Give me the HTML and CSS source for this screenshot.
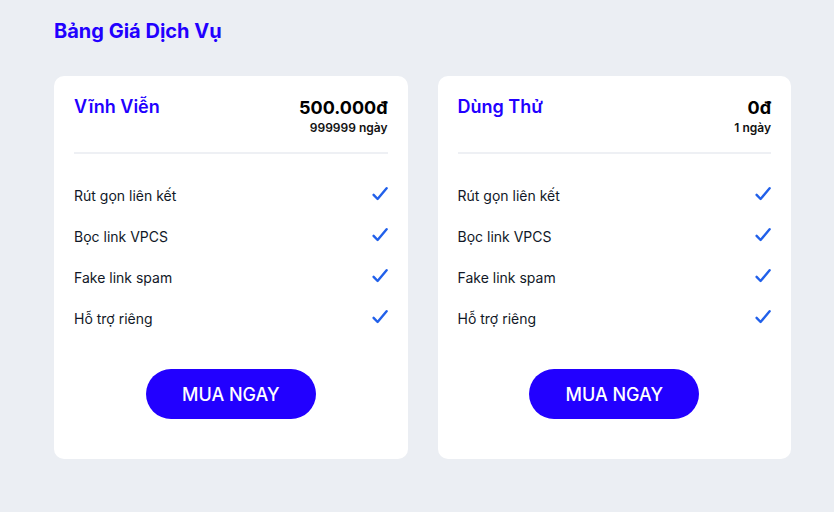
FILE: index.html
```html
<!DOCTYPE html>
<html lang="vi">
<head>
<meta charset="utf-8">
<title>Bảng Giá Dịch Vụ</title>
<link rel="stylesheet" href="styles.css">
</head>
<body>
<div class="page">
  <h1 class="heading">Bảng Giá Dịch Vụ</h1>
  <div class="plans">
    <div class="card">
      <div class="card-head">
        <div class="plan-name">Vĩnh Viễn</div>
        <div class="plan-price">
          <div class="price">500.000đ</div>
          <div class="days">999999 ngày</div>
        </div>
      </div>
      <ul class="features">
        <li class="feature"><span>Rút gọn liên kết</span><svg class="check" viewBox="0 0 16 16"><path d="M1.6 8.8 L5.6 13 L14.6 2.2"/></svg></li>
        <li class="feature"><span>Bọc link VPCS</span><svg class="check" viewBox="0 0 16 16"><path d="M1.6 8.8 L5.6 13 L14.6 2.2"/></svg></li>
        <li class="feature"><span>Fake link spam</span><svg class="check" viewBox="0 0 16 16"><path d="M1.6 8.8 L5.6 13 L14.6 2.2"/></svg></li>
        <li class="feature"><span>Hỗ trợ riêng</span><svg class="check" viewBox="0 0 16 16"><path d="M1.6 8.8 L5.6 13 L14.6 2.2"/></svg></li>
      </ul>
      <div class="actions"><button class="buy">MUA NGAY</button></div>
    </div>
    <div class="card">
      <div class="card-head">
        <div class="plan-name">Dùng Thử</div>
        <div class="plan-price">
          <div class="price">0đ</div>
          <div class="days">1 ngày</div>
        </div>
      </div>
      <ul class="features">
        <li class="feature"><span>Rút gọn liên kết</span><svg class="check" viewBox="0 0 16 16"><path d="M1.6 8.8 L5.6 13 L14.6 2.2"/></svg></li>
        <li class="feature"><span>Bọc link VPCS</span><svg class="check" viewBox="0 0 16 16"><path d="M1.6 8.8 L5.6 13 L14.6 2.2"/></svg></li>
        <li class="feature"><span>Fake link spam</span><svg class="check" viewBox="0 0 16 16"><path d="M1.6 8.8 L5.6 13 L14.6 2.2"/></svg></li>
        <li class="feature"><span>Hỗ trợ riêng</span><svg class="check" viewBox="0 0 16 16"><path d="M1.6 8.8 L5.6 13 L14.6 2.2"/></svg></li>
      </ul>
      <div class="actions"><button class="buy">MUA NGAY</button></div>
    </div>
  </div>
</div>
</body>
</html>
```
FILE: styles.css
```css
* { box-sizing: border-box; }
html, body { margin: 0; padding: 0; }
body {
  background: #ebeef3;
  font-family: Inter, "Noto Sans", "Liberation Sans", sans-serif;
  color: #111827;
  width: 834px;
  height: 512px;
  overflow: hidden;
}
.page {
  padding: 19px 43px 0 54px;
}
.heading {
  margin: 0 0 33px;
  font-size: 20px;
  line-height: 24px;
  font-weight: 700;
  color: #2200ff;
}
.plans {
  display: grid;
  grid-template-columns: 1fr 1fr;
  gap: 30px;
}
.card {
  background: #fff;
  border-radius: 10px;
  padding: 20px 20px 40px;
}
.card-head {
  display: flex;
  justify-content: space-between;
  align-items: flex-start;
  padding-bottom: 16px;
  border-bottom: 2px solid #eef0f4;
}
.plan-name {
  font-size: 18px;
  line-height: 21px;
  font-weight: 600;
  color: #2200ff;
}
.plan-price { text-align: right; }
.price {
  font-size: 18px;
  line-height: 24px;
  font-weight: 700;
  color: #000;
}
.days {
  font-size: 12px;
  line-height: 16px;
  font-weight: 600;
  color: #111;
}
.features {
  list-style: none;
  margin: 32px 0 0;
  padding: 0;
  display: flex;
  flex-direction: column;
  gap: 21px;
}
.feature {
  display: flex;
  justify-content: space-between;
  align-items: flex-start;
  font-size: 14px;
  line-height: 20px;
  font-weight: 400;
  color: #111827;
}
.check {
  width: 16px;
  height: 16px;
  flex: none;
}
.check path {
  fill: none;
  stroke: #2160ea;
  stroke-width: 2.4;
  stroke-linecap: round;
  stroke-linejoin: round;
}
.actions {
  display: flex;
  justify-content: center;
  margin-top: 40px;
}
.buy {
  width: 170px;
  height: 50px;
  border: none;
  border-radius: 25px;
  background: #2200ff;
  color: #fff;
  font-family: inherit;
  font-size: 18px;
  font-weight: 500;
  letter-spacing: 0;
  cursor: pointer;
}
```
